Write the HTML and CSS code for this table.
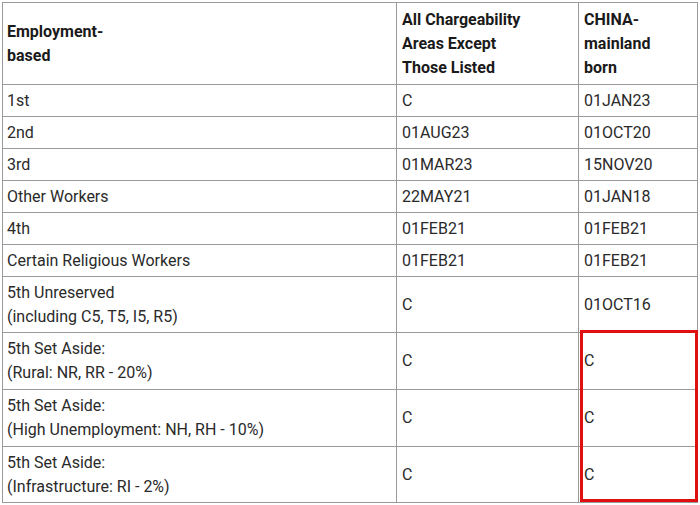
FILE: index.html
```html
<!DOCTYPE html>
<html>
<head>
<meta charset="utf-8">
<link rel="stylesheet" href="styles.css">
</head>
<body>
<div class="wrap">
<table class="bulletin">
<colgroup><col class="c1"><col class="c2"><col class="c3"></colgroup>
<thead>
<tr><th class="mid">Employment-<br>based</th><th>All Chargeability<br>Areas Except<br>Those Listed</th><th>CHINA-<br>mainland<br>born</th></tr>
</thead>
<tbody>
<tr><td>1st</td><td>C</td><td>01JAN23</td></tr>
<tr><td>2nd</td><td>01AUG23</td><td>01OCT20</td></tr>
<tr><td>3rd</td><td>01MAR23</td><td>15NOV20</td></tr>
<tr><td>Other Workers</td><td>22MAY21</td><td>01JAN18</td></tr>
<tr><td>4th</td><td>01FEB21</td><td>01FEB21</td></tr>
<tr><td>Certain Religious Workers</td><td>01FEB21</td><td>01FEB21</td></tr>
<tr><td>5th Unreserved<br>(including C5, T5, I5, R5)</td><td>C</td><td>01OCT16</td></tr>
<tr class="tall"><td>5th Set Aside:<br>(Rural: NR, RR - 20%)</td><td>C</td><td>C</td></tr>
<tr class="tall"><td>5th Set Aside:<br>(High Unemployment: NH, RH - 10%)</td><td>C</td><td>C</td></tr>
<tr><td>5th Set Aside:<br>(Infrastructure: RI - 2%)</td><td>C</td><td>C</td></tr>
</tbody>
</table>
<div class="highlight"></div>
</div>
</body>
</html>
```
FILE: styles.css
```css
html, body {
  margin: 0;
  padding: 0;
  background: #fff;
}
.wrap {
  position: relative;
  padding: 2px 0 0 2px;
}
.bulletin {
  border-collapse: collapse;
  table-layout: fixed;
  width: 695px;
  font-family: Roboto, "Liberation Sans", sans-serif;
  font-size: 16px;
  line-height: 24px;
  color: #2a2a2a;
}
.c1 { width: 394px; }
.c2 { width: 182px; }
.c3 { width: 119px; }
.bulletin th,
.bulletin td {
  border: 1px solid #9a9a9a;
  padding: 4px 5px 3px 4px;
  text-align: left;
  vertical-align: middle;
}
.bulletin th {
  font-weight: 700;
  color: #1a1a1a;
  vertical-align: top;
  padding-top: 5px;
  padding-bottom: 4px;
}
.bulletin th.mid {
  vertical-align: middle;
}
.bulletin tr.tall td {
  padding-bottom: 4px;
}
.bulletin td:nth-child(2),
.bulletin td:nth-child(3),
.bulletin th:nth-child(2),
.bulletin th:nth-child(3) {
  padding-left: 5px;
}
.highlight {
  position: absolute;
  left: 580px;
  top: 330px;
  width: 112px;
  height: 166px;
  border: 3px solid #e01010;
}
```
